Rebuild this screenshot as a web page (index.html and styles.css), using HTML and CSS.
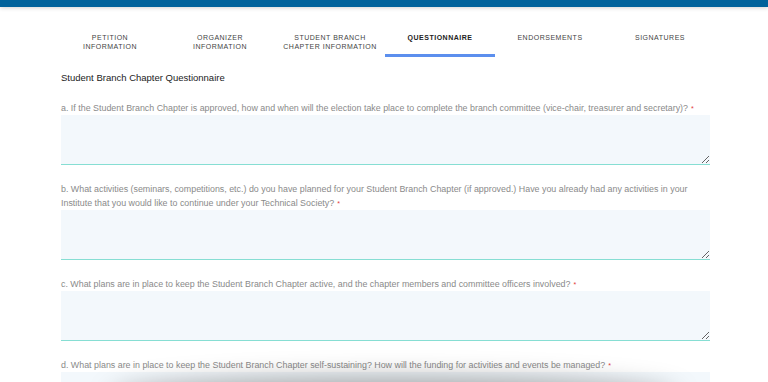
FILE: index.html
```html
<!DOCTYPE html>
<html lang="en">
  <head>
    <meta charset="UTF-8" />
    <meta name="viewport" content="width=device-width, initial-scale=1.0" />
    <title>Student Branch Chapter Petition</title>
    <link rel="stylesheet" href="styles.css">
  </head>
  <body>
    <div class="topbar"></div>

    <div class="page">
      <!-- Petition steps -->
      <nav class="tabs">
        <div class="tab">Petition<br />Information</div>
        <div class="tab">Organizer<br />Information</div>
        <div class="tab">Student Branch<br />Chapter Information</div>
        <div class="tab active">Questionnaire</div>
        <div class="tab">Endorsements</div>
        <div class="tab">Signatures</div>
      </nav>

      <form class="form">
        <h2 class="form-title">Student Branch Chapter Questionnaire</h2>

        <div class="question">
          <label for="q-a">a. If the Student Branch Chapter is approved, how and when will the election take place to complete the branch committee (vice-chair, treasurer and secretary)?<span class="req">*</span></label>
          <textarea id="q-a"></textarea>
        </div>

        <div class="question">
          <label for="q-b">b. What activities (seminars, competitions, etc.) do you have planned for your Student Branch Chapter (if approved.) Have you already had any activities in your Institute that you would like to continue under your Technical Society?<span class="req">*</span></label>
          <textarea id="q-b"></textarea>
        </div>

        <div class="question">
          <label for="q-c">c. What plans are in place to keep the Student Branch Chapter active, and the chapter members and committee officers involved?<span class="req">*</span></label>
          <textarea id="q-c"></textarea>
        </div>

        <div class="question">
          <label for="q-d">d. What plans are in place to keep the Student Branch Chapter self-sustaining? How will the funding for activities and events be managed?<span class="req">*</span></label>
          <textarea id="q-d"></textarea>
        </div>
      </form>
    </div>

    <!-- shadow of the floating action bar below the fold -->
    <div class="float-shadow"></div>
  </body>
</html>
```

FILE: styles.css
```css
body {
  margin: 0;
  background-color: white;
  font-family: "Liberation Sans", Arial, Helvetica, sans-serif;
  color: #333;
  overflow: hidden;
}

/* Header strip */
.topbar {
  height: 7px;
  background-color: #00629b;
  box-shadow: 0 1px 4px rgba(0, 0, 0, 0.18);
}

.page {
  width: 660px;
  margin-left: 55px;
}

/* Step tabs */
.tabs {
  display: grid;
  grid-template-columns: repeat(6, 1fr);
  margin-top: 26px;
}

.tab {
  padding-bottom: 3px;
  border-bottom: 3px solid transparent;
  font-size: 7px;
  line-height: 9px;
  letter-spacing: 0.5px;
  text-transform: uppercase;
  text-align: center;
  color: #444;
}

.tab.active {
  font-weight: bold;
  color: #222;
  border-bottom-color: #5c8fee;
}

/* Questionnaire */
.form {
  padding: 0 5px 0 6px;
}

.form-title {
  margin: 15px 0 17px;
  font-size: 9.5px;
  line-height: 12px;
  font-weight: normal;
  color: #222;
}

.question {
  margin-bottom: 17px;
}

.question label {
  display: block;
  font-size: 8.9px;
  line-height: 14px;
  color: #8a8a8a;
}

.req {
  display: inline-block;
  margin-left: 3px;
  font-size: 7px;
  line-height: 7px;
  color: #e23b3b;
}

.question textarea {
  display: block;
  box-sizing: border-box;
  width: 100%;
  height: 50px;
  margin: 0;
  border: none;
  border-bottom: 1.5px solid #86ded3;
  background-color: #f3f8fc;
  font-family: inherit;
}

.float-shadow {
  position: fixed;
  left: 110px;
  right: 90px;
  bottom: -40px;
  height: 40px;
  border-radius: 50%;
  box-shadow: 0 -4px 26px rgba(0, 0, 0, 0.35);
}
```
